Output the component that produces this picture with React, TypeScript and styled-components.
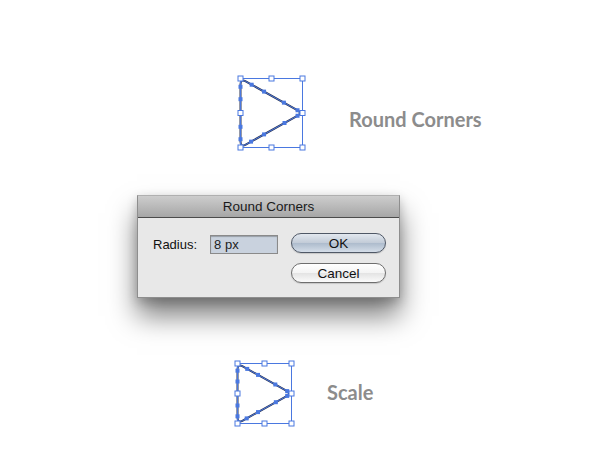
import React from 'react';
import styled, { createGlobalStyle } from 'styled-components';

const GlobalStyle = createGlobalStyle`
  html, body {
    margin: 0;
    padding: 0;
    background: #ffffff;
  }
`;

const BLUE = '#4a78e0';
const INK = '#2b3350';

type Pt = [number, number];

const roundedPath = (pts: Pt[], r: number) => {
  const n = pts.length;
  let d = '';
  for (let i = 0; i < n; i++) {
    const prev = pts[(i - 1 + n) % n];
    const cur = pts[i];
    const next = pts[(i + 1) % n];
    const v1 = [prev[0] - cur[0], prev[1] - cur[1]];
    const v2 = [next[0] - cur[0], next[1] - cur[1]];
    const l1 = Math.hypot(v1[0], v1[1]);
    const l2 = Math.hypot(v2[0], v2[1]);
    const a: Pt = [cur[0] + (v1[0] / l1) * r, cur[1] + (v1[1] / l1) * r];
    const b: Pt = [cur[0] + (v2[0] / l2) * r, cur[1] + (v2[1] / l2) * r];
    d += `${i === 0 ? 'M' : 'L'}${a[0]},${a[1]} Q${cur[0]},${cur[1]} ${b[0]},${b[1]} `;
  }
  return d + 'Z';
};

const lerp = (p: Pt, q: Pt, t: number): Pt => [p[0] + (q[0] - p[0]) * t, p[1] + (q[1] - p[1]) * t];

const Shape = ({ w, h }: { w: number; h: number }) => {
  const p = 4.5;
  const L = p;
  const R = p + w;
  const T = p;
  const B = p + h;
  const M = p + h / 2;
  const tl: Pt = [L, T];
  const bl: Pt = [L, B];
  const rc: Pt = [R, M];
  const d = roundedPath([tl, bl, rc], 6);
  const anchors: Pt[] = [
    ...[0.12, 0.3, 0.7, 0.88].map((t) => lerp(tl, bl, t)),
    ...[0.18, 0.38, 0.7, 0.92].map((t) => lerp(tl, rc, t)),
    ...[0.17, 0.38, 0.71, 0.92].map((t) => lerp(bl, rc, t)),
  ];
  const xs = [L, (L + R) / 2, R];
  const ys = [T, M, B];
  const handles: Pt[] = [];
  xs.forEach((x) =>
    ys.forEach((y) => {
      if (!(x === (L + R) / 2 && y === M)) handles.push([x, y]);
    })
  );
  return (
    <svg width={w + 9} height={h + 9} viewBox={`0 0 ${w + 9} ${h + 9}`}>
      <path d={d} fill="none" stroke={INK} strokeWidth={2} />
      <path d={d} fill="none" stroke={BLUE} strokeWidth={1} />
      <rect x={L} y={T} width={w} height={h} fill="none" stroke={BLUE} strokeWidth={1} />
      {anchors.map(([x, y], i) => (
        <rect key={'a' + i} x={x - 2} y={y - 2} width={4} height={4} fill={BLUE} />
      ))}
      {handles.map(([x, y], i) => (
        <rect key={'h' + i} x={x - 2.5} y={y - 2.5} width={5} height={5} fill="#fff" stroke={BLUE} strokeWidth={1} />
      ))}
    </svg>
  );
};

const Page = styled.div`
  width: 600px;
  height: 453px;
  display: flex;
  flex-direction: column;
  overflow: hidden;
`;

const Row = styled.div<{ $top: number; $left: number; $gap: number }>`
  display: flex;
  align-items: center;
  margin-top: ${(p) => p.$top}px;
  padding-left: ${(p) => p.$left}px;
  gap: ${(p) => p.$gap}px;
`;

const Label = styled.div<{ $shift: number }>`
  font-family: Lato, 'Open Sans', sans-serif;
  font-weight: 700;
  font-size: 20px;
  color: #8c8c8c;
  margin-top: ${(p) => p.$shift}px;
`;

const DialogWrap = styled.div`
  margin-top: 43px;
  padding-left: 137px;
`;

const Dialog = styled.div`
  width: 263px;
  height: 103px;
  box-sizing: border-box;
  background: #e8e8e8;
  border: 1px solid #8e8e8e;
  border-top-color: #b0b0b0;
  box-shadow: 0 18px 26px rgba(0, 0, 0, 0.5), 0 4px 10px rgba(0, 0, 0, 0.2);
  font-family: 'Liberation Sans', Arial, sans-serif;
  display: flex;
  flex-direction: column;
`;

const TitleBar = styled.div`
  height: 21px;
  background: linear-gradient(#cdcdcd, #a6a6a6);
  border-bottom: 1px solid #4b4b4b;
  display: flex;
  align-items: center;
  justify-content: center;
  font-size: 13.5px;
  color: #1a1a1a;
`;

const Body = styled.div`
  display: flex;
  align-items: flex-start;
  justify-content: space-between;
  padding: 15px 13px 0 15px;
`;

const Field = styled.div`
  display: flex;
  align-items: center;
  gap: 13px;
  margin-top: 2px;
  font-size: 13px;
  color: #111;
`;

const Input = styled.div`
  width: 68px;
  height: 19px;
  box-sizing: border-box;
  background: #c9d2de;
  border: 1px solid #8a8a8a;
  box-shadow: inset 0 1px 1px rgba(0, 0, 0, 0.25);
  padding-left: 3px;
  display: flex;
  align-items: center;
  font-size: 13px;
  color: #222;
`;

const Buttons = styled.div`
  display: flex;
  flex-direction: column;
  gap: 10px;
`;

const Button = styled.div<{ $primary?: boolean }>`
  width: 95px;
  height: 20px;
  box-sizing: border-box;
  border-radius: 10px;
  border: 1px solid ${(p) => (p.$primary ? '#4f5866' : '#6e6e6e')};
  background: ${(p) =>
    p.$primary
      ? 'linear-gradient(#e2e8ef, #c3ccd8 48%, #aebccd 52%, #d4dde8)'
      : 'linear-gradient(#ffffff, #f4f4f4 48%, #e4e4e4 52%, #fafafa)'};
  box-shadow: 0 1px 1px rgba(0, 0, 0, 0.15);
  display: flex;
  align-items: center;
  justify-content: center;
  font-size: 13.5px;
  color: #111;
`;

const App = () => {
  return (
    <Page>
      <GlobalStyle />
      <Row $top={74} $left={236} $gap={42}>
        <Shape w={62} h={69} />
        <Label $shift={12}>Round Corners</Label>
      </Row>
      <DialogWrap>
        <Dialog>
          <TitleBar>Round Corners</TitleBar>
          <Body>
            <Field>
              <span>Radius:</span>
              <Input>8 px</Input>
            </Field>
            <Buttons>
              <Button $primary>OK</Button>
              <Button>Cancel</Button>
            </Buttons>
          </Body>
        </Dialog>
      </DialogWrap>
      <Row $top={61} $left={233} $gap={31}>
        <Shape w={54} h={60} />
        <Label $shift={-4}>Scale</Label>
      </Row>
    </Page>
  );
};

export default App;
